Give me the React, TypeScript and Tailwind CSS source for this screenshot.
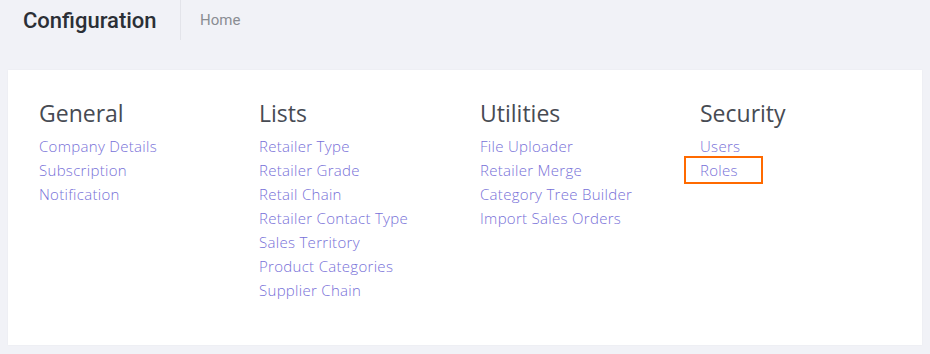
import React from "react"

const sections = [
  {
    title: "General",
    links: ["Company Details", "Subscription", "Notification"]
  },
  {
    title: "Lists",
    links: [
      "Retailer Type",
      "Retailer Grade",
      "Retail Chain",
      "Retailer Contact Type",
      "Sales Territory",
      "Product Categories",
      "Supplier Chain"
    ]
  },
  {
    title: "Utilities",
    links: ["File Uploader", "Retailer Merge", "Category Tree Builder", "Import Sales Orders"]
  },
  {
    title: "Security",
    links: ["Users", "Roles"]
  }
]

function App() {
  return (
    <div className="min-h-[354px] w-[930px] bg-[#f1f2f7] pb-2">
      <header className="flex h-10 items-stretch">
        <h1 className="flex w-[181px] items-center border-r border-[#e3e4ea] pl-[23px] font-['Roboto',sans-serif] text-[22px] font-medium text-[#2b2f36]">
          Configuration
        </h1>
        <div className="flex items-center pl-[19px] font-['Roboto',sans-serif] text-[15px] text-[#8a8d93]">
          Home
        </div>
      </header>
      <div className="mx-2 mt-[30px] bg-white pl-[31px] pt-[28px] pb-[43px] shadow-[0_0_2px_rgba(0,0,0,0.04)] font-['Open_Sans',sans-serif]">
        <div className="grid grid-cols-[220px_221px_220px_1fr]">
          {sections.map((section) => (
            <div key={section.title}>
              <h2 className="text-[23px] leading-[30px] text-[#474b53]">{section.title}</h2>
              <ul className="mt-[6px]">
                {section.links.map((link) => (
                  <li key={link} className="relative text-[15px] font-light leading-6 tracking-[0.3px] text-[#7770d8]">
                    <a>{link}</a>
                    {link === "Roles" && (
                      <span className="absolute -left-4 -top-[2px] h-7 w-[79px] border-2 border-[#ff6a00]" />
                    )}
                  </li>
                ))}
              </ul>
            </div>
          ))}
        </div>
      </div>
    </div>
  )
}

export default App
